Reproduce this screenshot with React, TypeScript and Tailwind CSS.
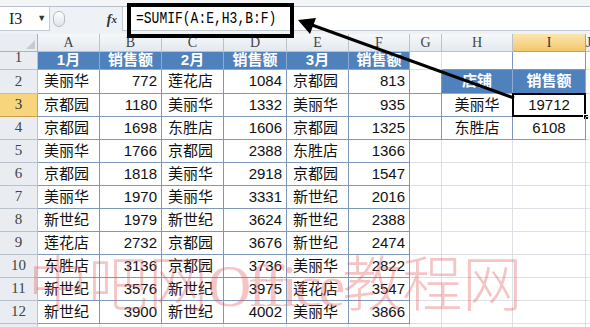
import React from "react";

type Cell = { text?: string; kind?: "head" | "text" | "num" | "center" };

const COLS = ["A", "B", "C", "D", "E", "F", "G", "H", "I", "J"];

const DATA: (string | number)[][] = [
  ["美丽华", 772, "莲花店", 1084, "京都园", 813],
  ["京都园", 1180, "美丽华", 1332, "美丽华", 935],
  ["京都园", 1698, "东胜店", 1606, "京都园", 1325],
  ["美丽华", 1766, "京都园", 2388, "东胜店", 1366],
  ["京都园", 1818, "美丽华", 2918, "京都园", 1547],
  ["美丽华", 1970, "美丽华", 3331, "新世纪", 2016],
  ["新世纪", 1979, "新世纪", 3624, "新世纪", 2388],
  ["莲花店", 2732, "京都园", 3676, "新世纪", 2474],
  ["东胜店", 3136, "京都园", 3736, "美丽华", 2822],
  ["新世纪", 3576, "新世纪", 3975, "莲花店", 3547],
  ["新世纪", 3900, "新世纪", 4002, "美丽华", 3866],
];

const HEADS = ["1月", "销售额", "2月", "销售额", "3月", "销售额"];

const SIDE: Record<number, string[]> = {
  2: ["店铺", "销售额"],
  3: ["美丽华", "19712"],
  4: ["东胜店", "6108"],
};

// what sits in a given cell (row number, column index 0..9)
function cellAt(r: number, c: number): Cell {
  if (c <= 5 && r === 1) return { text: HEADS[c], kind: "head" };
  if (c <= 5 && r >= 2 && r <= 12) {
    const v = DATA[r - 2][c];
    return { text: String(v), kind: typeof v === "number" ? "num" : "text" };
  }
  if ((c === 7 || c === 8) && SIDE[r]) {
    return { text: SIDE[r][c - 7], kind: r === 2 ? "head" : "center" };
  }
  return {};
}

function inMain(r: number, c: number) {
  return c <= 5 && r >= 1 && r <= 12;
}
function inSide(r: number, c: number) {
  return (c === 7 || c === 8) && r >= 2 && r <= 4;
}

const App = () => {
  const rows = Array.from({ length: 13 }, (_, i) => i + 1);

  return (
    <div className="relative w-[590px] h-[327px] overflow-hidden bg-white font-['Liberation_Sans','Noto_Sans_CJK_SC',sans-serif] text-[15px] text-[#111]">
      {/* formula bar */}
      <div className="h-[34px] bg-[#eef1f5] border-t-[6px] border-[#f4f5f7] flex items-stretch">
        <div className="flex w-full border-t border-[#b9c0c9] pb-[3px]">
          <div className="w-[50px] flex items-center bg-white border-r border-b border-[#c5cbd3] pl-[9px] font-['Liberation_Serif',serif] text-[16px] text-[#222]">
            I3
            <span className="ml-[15px] text-[9px] text-[#333]">▼</span>
          </div>
          <div className="w-[18px] flex items-center justify-center">
            <div className="w-[12px] h-[16px] rounded-full border border-[#b5bcc6] bg-gradient-to-b from-white to-[#dfe4ea]" />
          </div>
          <div className="w-[54px] flex items-center justify-end pr-[5px] font-['Liberation_Serif',serif] italic font-bold text-[14px] text-[#333]">
            f<span className="text-[11px]">x</span>
          </div>
          <div className="flex-1 flex items-center bg-white border-b border-l border-[#c5cbd3] pl-[13px] font-['Liberation_Mono',monospace] text-[13px] text-black">
            <span className="inline-block scale-y-[1.2]">=SUMIF(A:E,H3,B:F)</span>
          </div>
        </div>
      </div>

      {/* sheet grid */}
      <div className="grid grid-cols-[38px_62px_62px_62px_63px_62px_61px_32px_71px_73px_1fr] grid-rows-[18px_18px_24px_repeat(11,23px)]">
        {/* column header row */}
        <div className="bg-[#e9edf2] border-r border-b border-[#a9b3c0] flex items-end justify-end p-[2px]">
          <div className="w-0 h-0 border-l-[9px] border-l-transparent border-b-[9px] border-b-[#c6ccd3]" />
        </div>
        {COLS.map((c) => (
          <div
            key={c}
            className={
              c === "I"
                ? "bg-gradient-to-b from-[#fbe6b0] to-[#f3c767] border-r border-b border-[#c9a24f] flex items-center justify-center font-['Liberation_Serif',serif] text-[14px] text-[#333]"
                : "bg-gradient-to-b from-[#f6f8fa] to-[#e4e9ef] border-r border-b border-[#b8c1cc] flex items-center justify-center font-['Liberation_Serif',serif] text-[14px] text-[#444]"
            }
          >
            {c}
          </div>
        ))}

        {rows.map((r) => (
          <React.Fragment key={r}>
            <div
              className={
                r === 3
                  ? "bg-[#f7d57c] border-r border-b border-[#c9a24f] flex items-end justify-center pb-[1px] font-['Liberation_Serif',serif] text-[15px] text-[#333]"
                  : "bg-[#e9edf2] border-r border-b border-[#b8c1cc] flex items-end justify-center pb-[1px] font-['Liberation_Serif',serif] text-[15px] text-[#444]"
              }
            >
              {r <= 12 ? r : ""}
            </div>
            {COLS.map((_, c) => {
              const cell = cellAt(r, c);
              const framed = inMain(r, c) || inSide(r, c);
              let cls = "relative flex items-center border-r border-b whitespace-nowrap ";
              if (cell.kind === "head") {
                cls += "bg-[#4f81bd] text-white font-bold justify-center border-[#8eaad3] ";
              } else if (framed) {
                cls += "border-[#7d98b8] ";
              } else {
                cls += "border-[#dcdfe3] ";
              }
              if (cell.kind === "text") cls += "pl-[6px] ";
              if (cell.kind === "num") cls += "justify-end pr-[4px] ";
              if (cell.kind === "center") cls += "justify-center ";
              // left edge of the side table
              if (c === 6 && r >= 2 && r <= 4) cls = cls.replace("border-[#dcdfe3]", "border-[#7d98b8]");
              // bottom edge above the side table
              if (r === 1 && (c === 7 || c === 8)) cls = cls.replace("border-[#dcdfe3]", "border-[#7d98b8]");
              return (
                <div key={c} className={cls}>
                  {cell.text}
                  {r === 3 && c === 8 && (
                    <>
                      <div className="absolute -left-[1px] -top-[1px] -right-[1px] -bottom-[1px] border-2 border-black" />
                      <div className="absolute -right-[4px] -bottom-[4px] w-[6px] h-[6px] bg-black border border-white" />
                    </>
                  )}
                </div>
              );
            })}
          </React.Fragment>
        ))}
      </div>

      {/* annotation: box around the formula */}
      <div className="absolute left-[127px] top-[3px] w-[167px] h-[35px] border-4 border-black" />

      {/* annotation: arrow from I3 to the formula */}
      <svg className="absolute left-0 top-0 pointer-events-none" width="590" height="327">
        <line x1="514" y1="98" x2="312" y2="25" stroke="black" strokeWidth="3" />
        <polygon points="298,20 316,18 310,34" fill="black" />
      </svg>

      {/* watermark */}
      <div className="absolute left-[28px] top-[256px] pointer-events-none whitespace-nowrap leading-none text-[60px] text-[rgba(226,90,90,0.35)] font-['Liberation_Serif','Noto_Sans_CJK_SC',serif] font-light">
        中吧网<span className="tracking-[-3px]">Office</span>教程网
      </div>
    </div>
  );
};

export default App;
